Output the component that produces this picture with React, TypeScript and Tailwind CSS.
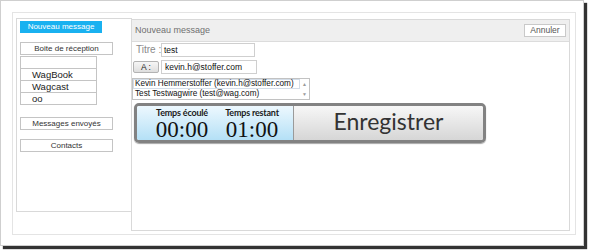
function SideButton({ label, className = "" }: { label: string; className?: string }) {
  return (
    <div
      className={`w-[93px] h-[13px] border border-[#c4c4c4] bg-white flex items-center justify-center text-[8px] leading-none text-[#333] whitespace-nowrap ${className}`}
    >
      {label}
    </div>
  );
}

function Sidebar() {
  const folders = ["", "WagBook", "Wagcast", "oo"];
  return (
    <div className="w-[116px] h-[194px] shrink-0 border border-[#d9d9d9] bg-white pl-[3px] pt-[2px] flex flex-col">
      <div className="w-[82px] h-[12px] bg-[#19b1f0] text-white text-[8px] leading-none flex items-center justify-center whitespace-nowrap">
        Nouveau message
      </div>
      <SideButton label="Boite de réception" className="mt-[9px]" />
      <div className="mt-px flex flex-col">
        {folders.map((f, i) => (
          <div
            key={i}
            className={`w-[77px] h-[13px] border border-[#c4c4c4] bg-white pl-[11px] flex items-center text-[9.5px] leading-none text-[#222] ${i > 0 ? "-mt-px" : ""}`}
          >
            {f}
          </div>
        ))}
      </div>
      <SideButton label="Messages envoyés" className="mt-[12px]" />
      <SideButton label="Contacts" className="mt-[9px]" />
    </div>
  );
}

function Recorder() {
  return (
    <div className="ml-[2px] mt-[3px] w-[352px] h-[40px] rounded-[5px] border-[3px] border-[#828282] shadow-[0_1px_1px_rgba(0,0,0,0.35)] flex overflow-hidden">
      <div className="w-[157px] h-full bg-gradient-to-b from-[#edf8fe] to-[#b4e0f6] border-r border-[#9a9a9a] pl-[15px] flex gap-[10px]">
        {[
          ["Temps écoulé", "00:00"],
          ["Temps restant", "01:00"],
        ].map(([label, time]) => (
          <div key={label} className="w-[60px] flex flex-col items-center pt-[2px]">
            <span className="font-['Lato',sans-serif] font-bold text-[9px] leading-[10px] tracking-[-0.2px] text-[#1a1a1a] whitespace-nowrap">
              {label}
            </span>
            <span className="font-['Liberation_Serif',serif] text-[23px] leading-[23px] text-[#111]">
              {time}
            </span>
          </div>
        ))}
      </div>
      <div className="flex-1 h-full bg-gradient-to-b from-[#f7f7f7] to-[#d6d6d6] flex items-center justify-center pb-[3px]">
        <span className="font-['Lato',sans-serif] text-[23px] leading-none text-[#333]">Enregistrer</span>
      </div>
    </div>
  );
}

function Main() {
  return (
    <div className="w-[439px] h-[212px] shrink-0 mt-px -ml-px border border-[#d9d9d9] bg-white flex flex-col">
      <div className="h-[22px] bg-[#efefef] border-b border-[#dcdcdc] flex items-center justify-between pl-[3px] pr-[3px]">
        <span className="text-[9px] leading-none text-[#6f6f6f]">Nouveau message</span>
        <div className="w-[42px] h-[13px] border border-[#c9c9c9] bg-white flex items-center justify-center text-[8.5px] leading-none text-[#555]">
          Annuler
        </div>
      </div>
      <div className="flex items-center mt-px">
        <span className="w-[25px] ml-[4px] text-[10px] leading-none text-[#8a8a8a] whitespace-nowrap">Titre :</span>
        <div className="w-[94px] h-[14px] border border-[#cfcfcf] bg-white pl-[2px] flex items-center text-[8.5px] leading-none text-[#111]">
          test
        </div>
      </div>
      <div className="flex items-center mt-[3px] ml-px gap-[2px]">
        <div className="w-[26px] h-[12px] rounded-[2px] border border-[#b3b3b3] bg-gradient-to-b from-[#f6f6f6] to-[#dedede] flex items-center justify-center text-[8.5px] leading-none text-[#222]">
          A :
        </div>
        <div className="w-[96px] h-[14px] border border-[#cfcfcf] bg-white pl-[3px] flex items-center text-[8.5px] leading-none text-[#111] whitespace-nowrap">
          kevin.h@stoffer.com
        </div>
      </div>
      <div className="mt-[4px] w-[178px] h-[22px] border border-[#c2c2c2] bg-white flex">
        <div className="flex-1 flex flex-col text-[8.2px] leading-none text-[#111] whitespace-nowrap">
          <div className="h-[10px] border border-[#d3dde8] flex items-center pl-px">
            Kevin Hemmerstoffer (kevin.h@stoffer.com)
          </div>
          <div className="h-[10px] flex items-center pl-[2px]">Test Testwagwire (test@wag.com)</div>
        </div>
        <div className="w-[9px] flex flex-col justify-between items-center text-[5px] leading-[8px] text-[#9a9a9a] py-px">
          <span>▲</span>
          <span>▼</span>
        </div>
      </div>
      <Recorder />
    </div>
  );
}

export default function App() {
  return (
    <div className="w-[590px] h-[251px] bg-white overflow-hidden font-['Liberation_Sans',Arial,sans-serif]">
      <div className="w-[584px] h-[246px] border border-[#cfcfcf] bg-white shadow-[3px_3px_1px_#333] p-[11px]">
        <div className="w-[564px] h-[223px] border border-[#e4e4e4] flex items-start pl-[3px] pt-[5px]">
          <Sidebar />
          <Main />
        </div>
      </div>
    </div>
  );
}
